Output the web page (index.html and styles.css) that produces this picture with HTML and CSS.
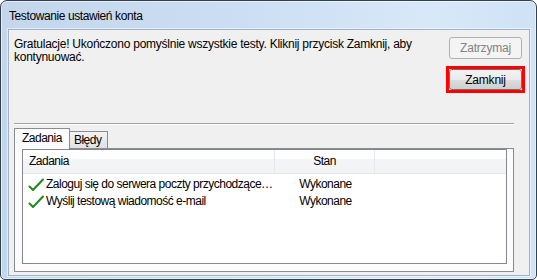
FILE: index.html
```html
<!DOCTYPE html>
<html>
<head>
    <title>Testowanie ustawień konta</title>
    <link rel="stylesheet" href="styles.css">
</head>
<body>
    <div class="window">
        <div class="titlebar">Testowanie ustawień konta</div>

        <div class="client">
            <div class="top-row">
                <p class="message">Gratulacje! Ukończono pomyślnie wszystkie testy. Kliknij przycisk Zamknij, aby kontynuować.</p>
                <div class="buttons">
                    <button class="btn" disabled>Zatrzymaj</button>
                    <div class="highlight">
                        <button class="btn">Zamknij</button>
                    </div>
                </div>
            </div>

            <div class="separator"></div>

            <div class="tabs">
                <div class="tab-strip">
                    <div class="tab active">Zadania</div>
                    <div class="tab">Błędy</div>
                </div>
                <div class="tab-panel">
                    <div class="listview">
                        <div class="lv-header">
                            <div class="col col-task">Zadania</div>
                            <div class="col col-state">Stan</div>
                            <div class="col col-rest"></div>
                        </div>
                        <div class="lv-rows">
                            <div class="lv-row">
                                <div class="col col-task">
                                    <svg class="tick" width="16" height="16" viewBox="0 0 16 16">
                                        <path d="M1.5 9.5 L5 13 L15 2.5" fill="none" stroke="#1e8a1e" stroke-width="2" stroke-linecap="round" stroke-linejoin="round"/>
                                    </svg>
                                    <span>Zaloguj się do serwera poczty przychodzące…</span>
                                </div>
                                <div class="col col-state">Wykonane</div>
                            </div>
                            <div class="lv-row">
                                <div class="col col-task">
                                    <svg class="tick" width="16" height="16" viewBox="0 0 16 16">
                                        <path d="M1.5 9.5 L5 13 L15 2.5" fill="none" stroke="#1e8a1e" stroke-width="2" stroke-linecap="round" stroke-linejoin="round"/>
                                    </svg>
                                    <span>Wyślij testową wiadomość e-mail</span>
                                </div>
                                <div class="col col-state">Wykonane</div>
                            </div>
                        </div>
                    </div>
                </div>
            </div>
        </div>
    </div>
</body>
</html>
```

FILE: styles.css
```css
* {
    box-sizing: border-box;
}
body {
    margin: 0;
    background: #ffffff;
    font-family: "Liberation Sans", Arial, sans-serif;
    font-size: 12px;
    color: #000;
}
.window {
    width: 537px;
    height: 280px;
    border: 1px solid #34404e;
    border-radius: 7px 7px 5px 5px;
    background: linear-gradient(90deg, #c3d6eb 0%, #cbdef3 45%, #d8e8f9 80%, #cfe2f6 100%);
    box-shadow: inset 0 0 0 1px rgba(255, 255, 255, 0.55);
    display: flex;
    flex-direction: column;
    padding: 0 6px 3px 7px;
}
.titlebar {
    height: 28px;
    line-height: 28px;
    padding: 1px 0 0 1px;
    white-space: nowrap;
    letter-spacing: -0.4px;
}
.client {
    flex: 1;
    display: flex;
    flex-direction: column;
    background: #f0f0f0;
    border: 1px solid #9fb2c8;
    box-shadow: 0 0 0 1px rgba(255, 255, 255, 0.5);
    padding: 7px 7px 3px 5px;
}
.top-row {
    display: flex;
    height: 86px;
}
.message {
    flex: 1;
    margin: 0;
    padding-top: 1px;
    padding-right: 20px;
    line-height: 13px;
    letter-spacing: -0.25px;
}
.buttons {
    width: 73px;
    display: flex;
    flex-direction: column;
}
.btn {
    width: 73px;
    height: 22px;
    font-family: inherit;
    font-size: 12px;
    letter-spacing: -0.2px;
    padding: 0;
    border: 1px solid #707070;
    border-radius: 3px;
    background: linear-gradient(#f2f2f2 0%, #ebebeb 50%, #dddddd 51%, #cfcfcf 100%);
    color: #000;
}
.btn:disabled {
    border-color: #adb2b5;
    background: #f4f4f4;
    color: #838383;
}
.highlight {
    margin: 7px -3px 0;
    border: 3px solid #ff0000;
}
.highlight .btn {
    display: block;
    height: 21px;
}
.separator {
    height: 2px;
    margin-right: 8px;
    border-top: 1px solid #a0a0a0;
    border-bottom: 1px solid #ffffff;
}
.tabs {
    flex: 1;
    display: flex;
    flex-direction: column;
    margin: 3px 8px 0 0;
}
.tab-strip {
    display: flex;
    align-items: flex-end;
    height: 20px;
    letter-spacing: -0.5px;
}
.tab {
    height: 17px;
    line-height: 16px;
    padding: 0 6px 0 4px;
    border: 1px solid #898c95;
    border-bottom: none;
    border-left: none;
    background: linear-gradient(#f3f3f3, #e1e1e1);
}
.tab.active {
    height: 21px;
    line-height: 18px;
    margin-bottom: -1px;
    padding: 0 7px;
    border-left: 1px solid #898c95;
    background: #fcfcfc;
    position: relative;
    z-index: 1;
}
.tab-panel {
    flex: 1;
    display: flex;
    border: 1px solid #898c95;
    background: #fcfcfc;
    padding: 0 6px 7px 7px;
}
.listview {
    flex: 1;
    border: 1px solid #828790;
    background: #ffffff;
    display: flex;
    flex-direction: column;
    letter-spacing: -0.5px;
}
.lv-header {
    display: flex;
    height: 24px;
    line-height: 22px;
    border-bottom: 1px solid #e3e5e8;
    background: linear-gradient(#ffffff 0%, #ffffff 40%, #f4f5f7 41%, #f2f3f5 100%);
}
.col-task {
    width: 252px;
    padding-left: 6px;
    white-space: nowrap;
    overflow: hidden;
}
.col-state {
    width: 100px;
    text-align: center;
}
.lv-header .col {
    border-right: 1px solid #e3e8ee;
}
.lv-header .col-rest {
    flex: 1;
    border-right: none;
}
.lv-rows {
    padding-top: 2px;
}
.lv-row {
    display: flex;
    height: 17px;
    line-height: 17px;
}
.lv-row .col-task {
    display: flex;
    align-items: center;
    padding-left: 5px;
}
.lv-row .col-state {
    width: 101px;
}
.tick {
    flex: none;
    margin-right: 2px;
}
```
